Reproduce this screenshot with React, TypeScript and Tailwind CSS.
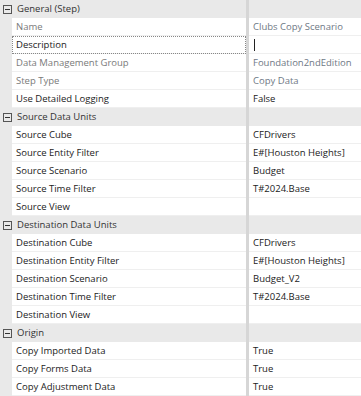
import React from 'react';

type Row = { label: string; value?: string; readOnly?: boolean; focused?: boolean; cursor?: boolean };
type Section = { title: string; rows: Row[] };

const sections: Section[] = [
  {
    title: 'General (Step)',
    rows: [
      { label: 'Name', value: 'Clubs Copy Scenario', readOnly: true },
      { label: 'Description', focused: true, cursor: true },
      { label: 'Data Management Group', value: 'Foundation2ndEdition', readOnly: true },
      { label: 'Step Type', value: 'Copy Data', readOnly: true },
      { label: 'Use Detailed Logging', value: 'False' },
    ],
  },
  {
    title: 'Source Data Units',
    rows: [
      { label: 'Source Cube', value: 'CFDrivers' },
      { label: 'Source Entity Filter', value: 'E#[Houston Heights]' },
      { label: 'Source Scenario', value: 'Budget' },
      { label: 'Source Time Filter', value: 'T#2024.Base' },
      { label: 'Source View', value: '' },
    ],
  },
  {
    title: 'Destination Data Units',
    rows: [
      { label: 'Destination Cube', value: 'CFDrivers' },
      { label: 'Destination Entity Filter', value: 'E#[Houston Heights]' },
      { label: 'Destination Scenario', value: 'Budget_V2' },
      { label: 'Destination Time Filter', value: 'T#2024.Base' },
      { label: 'Destination View', value: '' },
    ],
  },
  {
    title: 'Origin',
    rows: [
      { label: 'Copy Imported Data', value: 'True' },
      { label: 'Copy Forms Data', value: 'True' },
      { label: 'Copy Adjustment Data', value: 'True' },
    ],
  },
];

const CollapseBox = () => (
  <svg width="9" height="9" viewBox="0 0 9 9" className="shrink-0">
    <rect x="0.5" y="0.5" width="8" height="8" fill="none" stroke="#555" strokeWidth="1" />
    <line x1="2" y1="4.5" x2="7" y2="4.5" stroke="#333" strokeWidth="1" />
  </svg>
);

const PropertyGrid: React.FC = () => {
  return (
    <div
      className="w-[361px] h-[396px] overflow-hidden bg-[#e9e9e9] text-[9.5px] leading-none"
      style={{ fontFamily: '"Open Sans", "Noto Sans", sans-serif' }}
    >
      {sections.map((s) => (
        <div key={s.title}>
          <div className="flex h-[18px]">
            <div className="flex items-center w-[246px] pl-[3px] gap-[5px] text-[#333]">
              <CollapseBox />
              <span>{s.title}</span>
            </div>
            <div className="w-[3px] bg-[#d6d6d6]" />
            <div className="flex-1" />
          </div>
          {s.rows.map((r) => (
            <div key={r.label} className="flex h-[18px]">
              <div className="w-[12px]" />
              <div className="w-[234px] bg-white border-b border-[#efefef] relative flex items-center pl-[4px]">
                <span className={r.readOnly ? 'text-[#7a7a7a]' : 'text-[#222]'}>{r.label}</span>
                {r.focused && (
                  <div className="absolute inset-x-0 top-0 bottom-[-1px] border border-dotted border-[#888]" />
                )}
              </div>
              <div className="w-[3px] bg-[#d6d6d6]" />
              <div className="flex-1 bg-white border-b border-[#efefef] flex items-center pl-[4px]">
                {r.cursor ? (
                  <div className="w-px h-[12px] bg-[#222] ml-px" />
                ) : (
                  <span className={r.readOnly ? 'text-[#6f7885]' : 'text-[#222]'}>{r.value}</span>
                )}
              </div>
            </div>
          ))}
        </div>
      ))}
    </div>
  );
};

export default function App() {
  return <PropertyGrid />;
}
